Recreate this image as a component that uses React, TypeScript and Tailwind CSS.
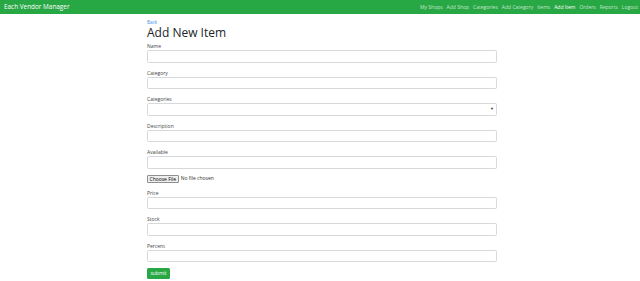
import React from "react";

const Field = ({ label, select = false }: { label: string; select?: boolean }) => (
  <div className="mb-[7px]">
    <div className="h-[6px] mb-[1px] text-[5px] leading-[6px] text-[#444]">{label}</div>
    <div className="h-[12.5px] w-full border border-[#d6d9dc] rounded-[1.5px] bg-white flex items-center justify-end pr-[2px]">
      {select && <span className="text-[4px] leading-none text-[#333]">▼</span>}
    </div>
  </div>
);

export default function App() {
  const links = ["My Shops", "Add Shop", "Categories", "Add Category", "Items", "Add Item", "Orders", "Reports", "Logout"];
  return (
    <div className="w-[640px] h-[281px] bg-white" style={{ fontFamily: '"Open Sans", "Noto Sans", sans-serif' }}>
      <div className="h-[14px] bg-[#28a745] flex items-center justify-between pl-[4px] pr-[2px]">
        <span className="text-white text-[6.4px] leading-none">Each Vendor Manager</span>
        <div className="flex items-center gap-[4px]">
          {links.map((l) => (
            <span
              key={l}
              className={
                "text-[5px] leading-none " + (l === "Add Item" ? "text-white" : "text-[#c4e6cc]")
              }
            >
              {l}
            </span>
          ))}
        </div>
      </div>
      <div className="w-[350px] ml-[147px] pt-[5px]">
        <div className="h-[6px] text-[4.6px] leading-[6px] text-[#3b8fe8]">Back</div>
        <div className="mt-[1.5px] text-[12px] leading-[11px] text-[#212529] mb-[5.5px]">Add New Item</div>
        <Field label="Name" />
        <Field label="Category" />
        <Field label="Categories" select />
        <Field label="Description" />
        <Field label="Available" />
        <div className="flex items-center h-[8px] mt-[-1px] mb-[7px]">
          <div className="h-[8px] px-[1.5px] border border-[#8f8f8f] bg-[#efefef] rounded-[1px] text-[5px] leading-[6px] text-black flex items-center">
            Choose File
          </div>
          <span className="ml-[2px] text-[5px] leading-none text-[#333]">No file chosen</span>
        </div>
        <Field label="Price" />
        <Field label="Stock" />
        <Field label="Percent" />
        <div className="mt-[-1px] w-[23px] h-[11px] bg-[#28a745] rounded-[1.5px] flex items-center justify-center text-white text-[5px] leading-none">
          submit
        </div>
      </div>
    </div>
  );
}
